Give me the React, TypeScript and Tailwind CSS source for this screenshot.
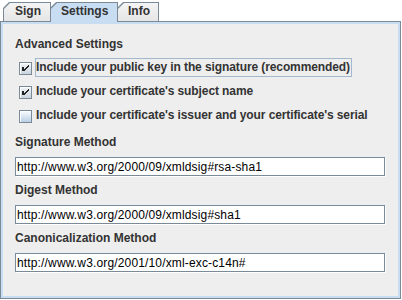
import React from "react";

function Tab({ label, selected, className }: { label: string; selected?: boolean; className: string }) {
  return (
    <div
      className={`bg-[#7a8a99] pt-px px-px [clip-path:polygon(0_6px,6px_0,100%_0,100%_100%,0_100%)] ${
        selected ? "relative z-10 h-[20px]" : "h-[19px]"
      } ${className}`}
    >
      <div
        className={`h-full pt-px leading-[15px] font-bold text-[#333] [clip-path:polygon(0_6px,6px_0,100%_0,100%_100%,0_100%)] ${
          selected ? "bg-[#c8ddf2]" : "bg-gradient-to-b from-[#f4f4f4] to-[#e6e6e6]"
        }`}
      >
        {label}
      </div>
    </div>
  );
}

function CheckRow({ label, checked, focused }: { label: string; checked?: boolean; focused?: boolean }) {
  return (
    <div className="flex items-start h-[24px] pl-[4px]">
      <div
        className={`mt-[6px] w-[13px] h-[13px] shrink-0 border border-[#7a8a99] shadow-[inset_1px_1px_0_#fff] bg-gradient-to-b ${
          checked ? "from-[#f2f4f7] to-[#c9d3de]" : "from-[#fbfcfe] to-[#b9cfe5]"
        }`}
      >
        {checked && (
          <svg width="11" height="11" viewBox="0 0 11 11" shapeRendering="crispEdges">
            <g fill="#222">
              <rect x="2" y="4" width="2" height="4" />
              <rect x="4" y="6" width="1" height="2" />
              <rect x="5" y="5" width="1" height="2" />
              <rect x="6" y="4" width="1" height="2" />
              <rect x="7" y="3" width="1" height="2" />
              <rect x="8" y="2" width="1" height="2" />
            </g>
          </svg>
        )}
      </div>
      <span
        className={`ml-[3px] mt-[2px] h-[19px] leading-[17px] pr-[1px] border whitespace-nowrap font-bold tracking-[-0.1px] text-[#333] ${
          focused ? "border-[#a3b8cc]" : "border-transparent"
        }`}
      >
        {label}
      </span>
    </div>
  );
}

function Field({ label, value }: { label: string; value: string }) {
  return (
    <div>
      <div className="mt-[7px] leading-[15px] font-bold text-[#333]">{label}</div>
      <input
        readOnly
        value={value}
        className="mt-[7px] block w-[370px] h-[19px] px-px border border-[#7a8a99] bg-white shadow-[1px_1px_0_#fff] text-black tracking-[0.15px] outline-none"
      />
    </div>
  );
}

export default function App() {
  return (
    <div className="w-[402px] h-[300px] bg-white text-[12px] font-['Liberation_Sans',Arial,sans-serif]">
      {/* Tabs */}
      <div className="flex items-start h-[19px] mt-[2px] pl-[3px]">
        <Tab label="Sign" className="w-[48px] [&>div]:pl-[11px]" />
        <Tab label="Settings" selected className="-ml-px w-[68px] [&>div]:pl-[10px]" />
        <Tab label="Info" className="-ml-px w-[42px] [&>div]:pl-[10px]" />
      </div>

      {/* Panel */}
      <div className="w-[401px] h-[278px] border border-[#7a8a99]">
        <div className="h-full border-2 border-[#c8ddf2] bg-[#eeeeee] px-[12px] pt-[13px]">
          <div className="leading-[15px] font-bold text-[#333]">Advanced Settings</div>
          <div className="mt-[4px]">
            <CheckRow label="Include your public key in the signature (recommended)" checked focused />
            <CheckRow label="Include your certificate's subject name" checked />
            <CheckRow label="Include your certificate's issuer and your certificate's serial" />
          </div>
          <Field label="Signature Method" value="http://www.w3.org/2000/09/xmldsig#rsa-sha1" />
          <Field label="Digest Method" value="http://www.w3.org/2000/09/xmldsig#sha1" />
          <Field label="Canonicalization Method" value="http://www.w3.org/2001/10/xml-exc-c14n#" />
        </div>
      </div>
    </div>
  );
}
